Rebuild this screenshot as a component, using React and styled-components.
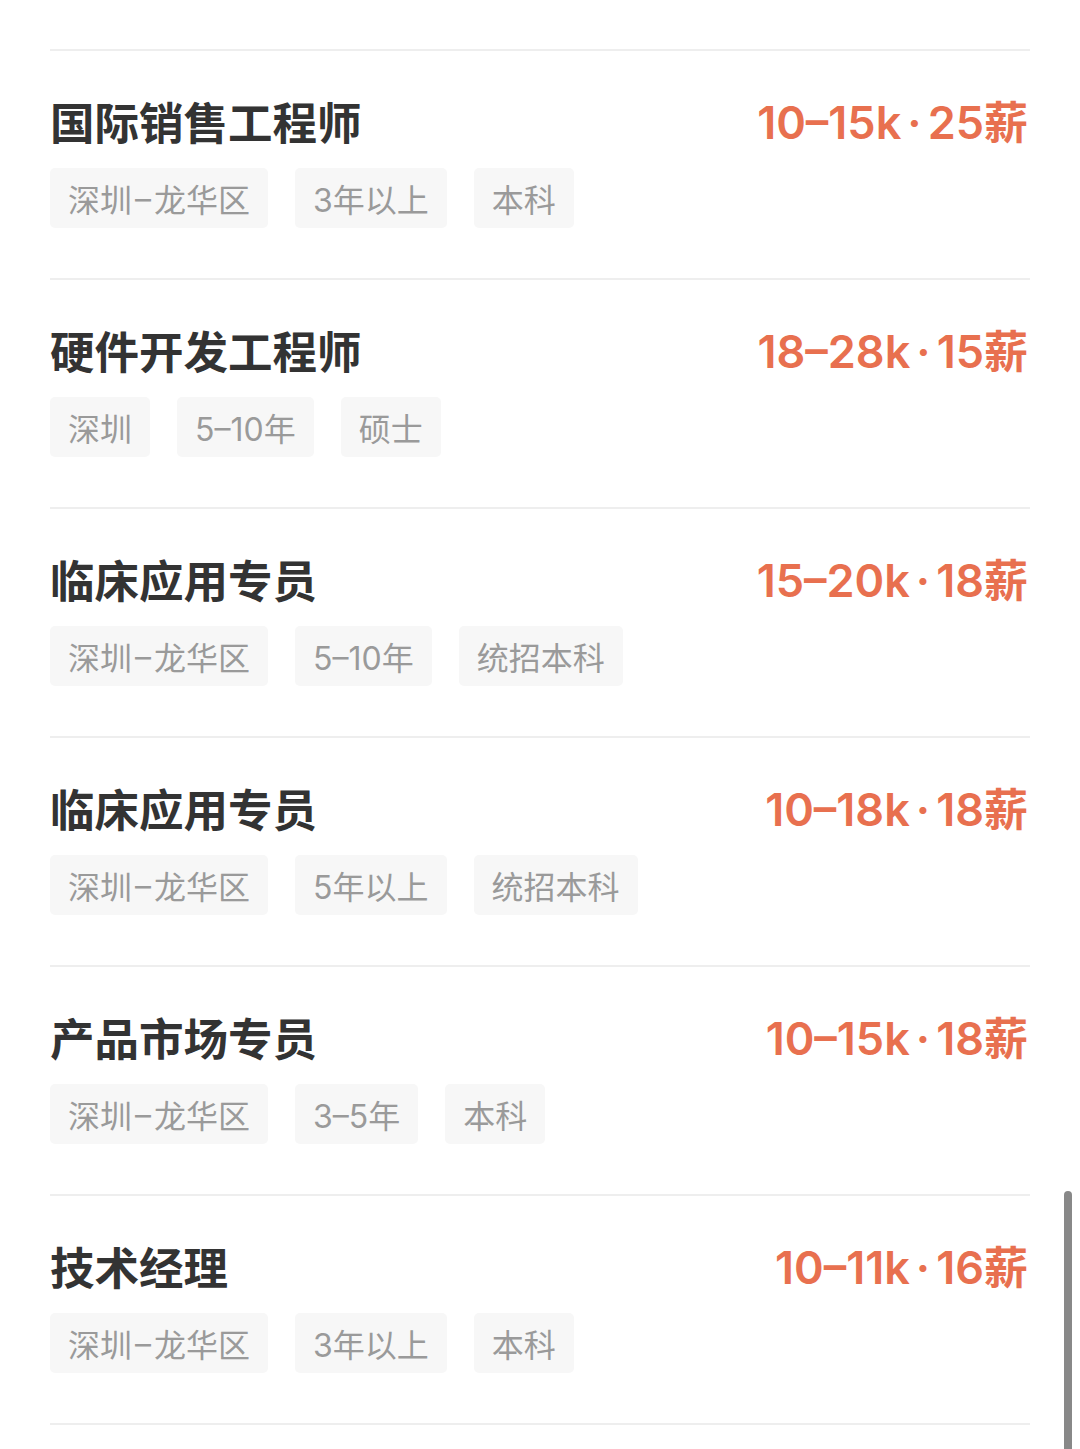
import React from "react";
import styled, { createGlobalStyle } from "styled-components";

const Global = createGlobalStyle`
  html, body { margin: 0; padding: 0; background: #ffffff; }
  body { font-family: Inter, "Noto Sans CJK SC", sans-serif; }
  * { box-sizing: border-box; }
`;

const Page = styled.div`
  width: 1080px;
  min-height: 1449px;
  padding: 49px 50px 0 50px;
  background: #fff;
  overflow: hidden;
`;

const Item = styled.div`
  border-top: 2px solid #eeeeee;
  padding: 40px 0 50px;
  display: flex;
  flex-direction: column;
  gap: 17px;
`;

const TopRow = styled.div`
  display: flex;
  justify-content: space-between;
  align-items: center;
  height: 60px;
`;

const Title = styled.div`
  font-family: "Noto Sans CJK SC", sans-serif;
  font-size: 44.5px;
  font-weight: 700;
  color: #333333;
  line-height: 58px;
`;

const Salary = styled.div`
  font-family: Inter, "Noto Sans CJK SC", sans-serif;
  font-size: 45px;
  font-weight: 600;
  color: #e8704f;
  line-height: 58px;
  padding-right: 2px;
`;

const Dot = styled.span`
  margin: 0 6px;
`;

const Xin = styled.span`
  font-family: "Noto Sans CJK SC", sans-serif;
  font-weight: 700;
  font-size: 44px;
`;

const Tags = styled.div`
  display: flex;
  gap: 27px;
`;

const Tag = styled.div`
  height: 60px;
  padding: 0 18px;
  background: #f7f7f7;
  border-radius: 5px;
  display: flex;
  align-items: center;
  font-family: Inter, "Noto Sans CJK SC", sans-serif;
  font-size: 32px;
  font-weight: 400;
  color: #9a9a9a;
`;

const Dash = styled.span`
  margin: 0 3px;
`;

const Scrollbar = styled.div`
  position: fixed;
  right: 8px;
  top: 1191px;
  width: 8px;
  height: 270px;
  border-radius: 4px;
  background: #888888;
`;

const jobs = [
  { title: "国际销售工程师", range: "10–15k", months: "25", tags: ["深圳–龙华区", "3年以上", "本科"] },
  { title: "硬件开发工程师", range: "18–28k", months: "15", tags: ["深圳", "5–10年", "硕士"] },
  { title: "临床应用专员", range: "15–20k", months: "18", tags: ["深圳–龙华区", "5–10年", "统招本科"] },
  { title: "临床应用专员", range: "10–18k", months: "18", tags: ["深圳–龙华区", "5年以上", "统招本科"] },
  { title: "产品市场专员", range: "10–15k", months: "18", tags: ["深圳–龙华区", "3–5年", "本科"] },
  { title: "技术经理", range: "10–11k", months: "16", tags: ["深圳–龙华区", "3年以上", "本科"] },
];

function renderTag(t) {
  const m = t.match(/^(深圳)–(.+)$/);
  if (m) {
    return (
      <>
        {m[1]}
        <Dash>–</Dash>
        {m[2]}
      </>
    );
  }
  return t;
}

export default function App() {
  return (
    <>
      <Global />
      <Page>
        {jobs.map((j, i) => (
          <Item key={i}>
            <TopRow>
              <Title>{j.title}</Title>
              <Salary>
                {j.range}
                <Dot>·</Dot>
                {j.months}
                <Xin>薪</Xin>
              </Salary>
            </TopRow>
            <Tags>
              {j.tags.map((t, k) => (
                <Tag key={k}>{renderTag(t)}</Tag>
              ))}
            </Tags>
          </Item>
        ))}
        <Item />
      </Page>
      <Scrollbar />
    </>
  );
}
